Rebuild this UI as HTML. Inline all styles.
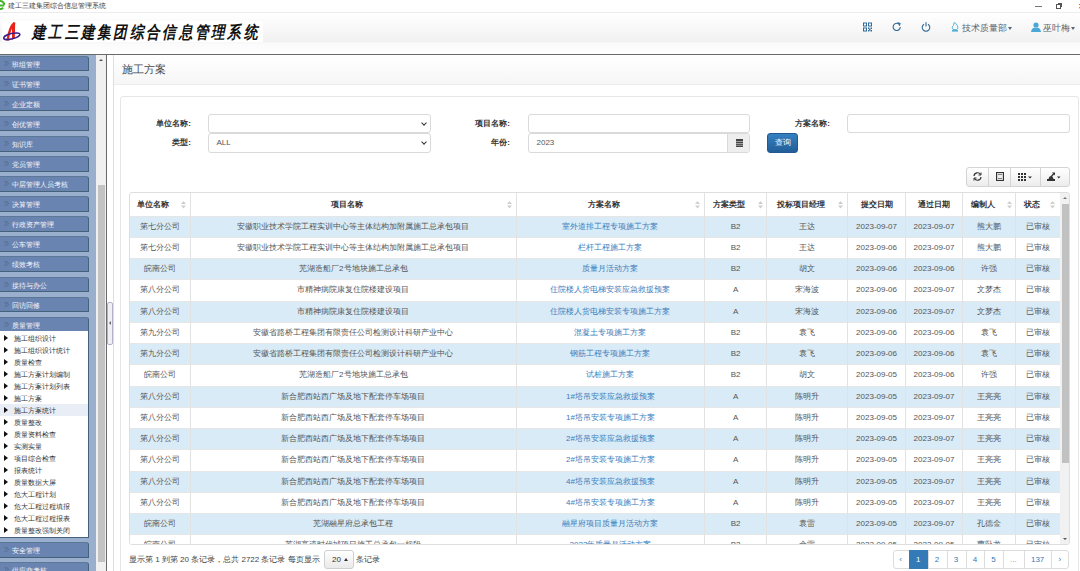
<!DOCTYPE html>
<html><head><meta charset="utf-8">
<style>
*{box-sizing:border-box;}
html,body{margin:0;padding:0;}
body{width:1080px;height:571px;overflow:hidden;position:relative;background:#fff;font-family:"Liberation Sans",sans-serif;color:#333;}
.abs{position:absolute;}
/* title bar */
#tb{left:0;top:0;width:1080px;height:13px;background:#fff;border-bottom:1px solid #ececec;}
#tb .t{left:8px;top:0.5px;font-size:7px;line-height:10px;color:#444;white-space:nowrap;}
/* header */
#hd{left:0;top:13px;width:1080px;height:41px;background:linear-gradient(#fff,#f1f1f1 29px,#f5f5f5 29px,#fafafa 30px,#fff 41px);}
#hdline{left:0;top:54px;width:1080px;height:1px;background:#6a6a6a;}
#logo{left:2px;top:21px;width:261px;height:21px;background:#fff;}
#logo .ttl{left:29.5px;top:2px;font-family:"Liberation Serif",serif;font-style:italic;font-weight:bold;font-size:17px;line-height:19px;letter-spacing:3.35px;color:#111;white-space:nowrap;transform:scaleX(0.8);transform-origin:0 0;}
.hic{top:21px;height:10px;}
.hnav{top:20.5px;font-size:9.3px;line-height:14px;color:#5a6673;white-space:nowrap;}
/* sidebar */
#sb{left:0;top:55px;width:96px;height:516px;background:#9aaecd;overflow:hidden;}
.mi{position:absolute;left:0;width:89px;height:15.5px;background:#6a84b1;border:1px solid #44637a;border-left:none;border-top-color:#5d7896;border-radius:0 3px 0 0;}
.mi span{position:absolute;left:12px;top:3px;font-size:7px;line-height:10px;color:#f6f8fc;white-space:nowrap;}
.mi i{position:absolute;left:4px;top:3px;width:6px;height:7px;}
.mi i svg{display:block;}
#sub{left:0;top:331px;width:89px;height:207px;background:#fff;border-right:1px solid #44637a;border-bottom:1px solid #44637a;}
.si{position:absolute;left:0;width:88px;height:12px;}
.si b{position:absolute;left:4px;top:3px;width:0;height:0;border-top:3px solid transparent;border-bottom:3px solid transparent;border-left:4px solid #111;}
.si span{position:absolute;left:13.5px;top:1.5px;font-size:7px;line-height:9px;color:#333;white-space:nowrap;}
#sbs{left:96px;top:55px;width:10px;height:516px;background:#f0f0f0;}
#sbthumb{left:98px;top:185px;width:7px;height:377px;background:#c3c3c3;}
#vline{left:106px;top:55px;width:1px;height:516px;background:#6a6a6a;}
#pline{left:113px;top:55px;width:1px;height:516px;background:#dcdcee;}
#handle{left:107px;top:302px;width:6px;height:43px;background:#f0f0f4;border:1px solid #b4b0cc;border-radius:2px;}
/* content */
#ch{left:114px;top:55px;width:966px;height:30px;background:linear-gradient(#fff,#f6f6f6);border-bottom:1px solid #ececec;}
#ch span{position:absolute;left:8px;top:7px;font-size:10.5px;line-height:14px;color:#4a4a4a;}
#panel{left:120px;top:96px;width:959px;height:490px;border:1px solid #e6e6e6;border-radius:3px;background:#fff;}
.lbl{font-size:8px;line-height:10px;color:#333;font-weight:bold;text-align:right;white-space:nowrap;}
.inp{height:19px;border:1px solid #dadada;border-radius:3px;background:#fff;}
.inp span{position:absolute;left:7.5px;top:4px;font-size:8px;line-height:10px;color:#555;}
.chev{position:absolute;right:4px;top:6px;width:4px;height:4px;border-right:1px solid #333;border-bottom:1px solid #333;transform:rotate(45deg);}
.cell{font-size:8px;line-height:21px;text-align:center;white-space:nowrap;overflow:hidden;}
.th{font-size:8px;line-height:10px;font-weight:bold;color:#333;white-space:nowrap;}
.foot{font-size:8px;line-height:10px;color:#444;white-space:nowrap;}
</style></head><body>

<!-- title bar -->
<div id="tb" class="abs">
  <svg class="abs" style="left:-4px;top:0px" width="9" height="10" viewBox="0 0 9 10"><path d="M8.3 5.6 H2 M8.3 5 A4 4 0 1 0 7.2 7.8" fill="none" stroke="#45b52c" stroke-width="2"/></svg>
  <div class="abs t">建工三建集团综合信息管理系统</div>
  <div class="abs" style="left:1035px;top:5.5px;width:7px;height:1px;background:#777;"></div>
  <div class="abs" style="left:1056px;top:4px;width:5px;height:5px;border:1px solid #555;"></div>
  <div class="abs" style="left:1058px;top:3px;width:4px;height:4px;border-top:1px solid #555;border-right:1px solid #555;"></div>
  <div class="abs" style="left:1078px;top:2px;font-size:8px;line-height:9px;color:#333;">✕</div>
</div>

<!-- header -->
<div id="hd" class="abs"></div>
<div id="logo" class="abs">
  <svg class="abs" style="left:0;top:0" width="22" height="21" viewBox="0 0 22 21">
    <path d="M10 4 L13.2 1 L12.8 17.5 L10 18.5 Z" fill="#e8221c"/>
    <path d="M12.6 1.8 Q7.5 6 5.6 19.5" fill="none" stroke="#e8221c" stroke-width="2.4"/>
    <ellipse cx="9.8" cy="15.2" rx="8.3" ry="2.7" fill="none" stroke="#3b1d86" stroke-width="1.5" transform="rotate(-14 9.8 15.2)"/>
  </svg>
  <div class="abs ttl">建工三建集团综合信息管理系统</div>
</div>
<div id="hdline" class="abs"></div>

<!-- header icons -->
<svg class="abs hic" style="left:863px;top:22px" width="9" height="9" viewBox="0 0 9 9" fill="#2f6a98">
  <path d="M0 0h4v4h-4zM1 1v2h2v-2zM5 0h4v4h-4zM6 1v2h2v-2zM0 5h4v4h-4zM1 6v2h2v-2z" fill-rule="evenodd"/>
  <rect x="5" y="5" width="1.5" height="1.5"/><rect x="7.5" y="5" width="1.5" height="1.5"/><rect x="6" y="6.5" width="1.5" height="1.5"/><rect x="5" y="7.5" width="1.2" height="1.5"/><rect x="7.5" y="7.5" width="1.5" height="1.5"/>
</svg>
<svg class="abs hic" style="left:892px;top:22px" width="10" height="10" viewBox="0 0 10 10" fill="none" stroke="#2f6a98" stroke-width="1.1">
  <path d="M8.3 5 A3.6 3.6 0 1 1 6.8 2"/><path d="M5.6 0.6 L8.3 1.4 L7.3 4" fill="#2f6a98" stroke-width="0.8"/>
</svg>
<svg class="abs hic" style="left:921px;top:22px" width="10" height="10" viewBox="0 0 10 10" fill="none" stroke="#2f6a98" stroke-width="1.1">
  <path d="M3 2.2 A3.8 3.8 0 1 0 7 2.2"/><path d="M5 0.3 V4.5"/>
</svg>
<svg class="abs hic" style="left:951px;top:22px" width="8" height="10" viewBox="0 0 8 10">
  <path d="M3 0.5 L5 1.5 L6.5 4 L7 6.5 L5.5 7.5 L2 7.5 L1 5 L2.5 3.5 Z" fill="none" stroke="#4fb0d8" stroke-width="0.9"/>
  <rect x="1" y="8" width="6" height="1.6" fill="#4fb0d8"/>
</svg>
<div class="abs hnav" style="left:962px;">技术质量部<span style="display:inline-block;width:0;height:0;border-left:2.5px solid transparent;border-right:2.5px solid transparent;border-top:3px solid #5a6673;vertical-align:middle;margin-left:1px"></span></div>
<svg class="abs hic" style="left:1031px;top:22px" width="10" height="10" viewBox="0 0 10 10">
  <circle cx="5" cy="3" r="2.6" fill="#4aa8d6"/><path d="M0 10 Q0.5 6 3.5 5.8 L6.5 5.8 Q9.5 6 10 10 Z" fill="#4aa8d6"/>
</svg>
<div class="abs hnav" style="left:1043px;">巫叶梅<span style="display:inline-block;width:0;height:0;border-left:2.5px solid transparent;border-right:2.5px solid transparent;border-top:3px solid #5a6673;vertical-align:middle;margin-left:1px"></span></div>

<!-- SIDEBAR -->
<div id="sb" class="abs">
<div class="mi" style="top:0.7px"><i><svg width="6" height="7" viewBox="0 0 6 7"><path d="M0.5 1 L2.5 3.5 L0.5 6 M2.5 1 L4.5 3.5 L2.5 6" fill="none" stroke="#44546c" stroke-width="0.7" stroke-dasharray="1 0.6"/></svg></i><span>班组管理</span></div>
<div class="mi" style="top:20.8px"><i><svg width="6" height="7" viewBox="0 0 6 7"><path d="M0.5 1 L2.5 3.5 L0.5 6 M2.5 1 L4.5 3.5 L2.5 6" fill="none" stroke="#44546c" stroke-width="0.7" stroke-dasharray="1 0.6"/></svg></i><span>证书管理</span></div>
<div class="mi" style="top:40.8px"><i><svg width="6" height="7" viewBox="0 0 6 7"><path d="M0.5 1 L2.5 3.5 L0.5 6 M2.5 1 L4.5 3.5 L2.5 6" fill="none" stroke="#44546c" stroke-width="0.7" stroke-dasharray="1 0.6"/></svg></i><span>企业定额</span></div>
<div class="mi" style="top:60.9px"><i><svg width="6" height="7" viewBox="0 0 6 7"><path d="M0.5 1 L2.5 3.5 L0.5 6 M2.5 1 L4.5 3.5 L2.5 6" fill="none" stroke="#44546c" stroke-width="0.7" stroke-dasharray="1 0.6"/></svg></i><span>创优管理</span></div>
<div class="mi" style="top:81.0px"><i><svg width="6" height="7" viewBox="0 0 6 7"><path d="M0.5 1 L2.5 3.5 L0.5 6 M2.5 1 L4.5 3.5 L2.5 6" fill="none" stroke="#44546c" stroke-width="0.7" stroke-dasharray="1 0.6"/></svg></i><span>知识库</span></div>
<div class="mi" style="top:101.1px"><i><svg width="6" height="7" viewBox="0 0 6 7"><path d="M0.5 1 L2.5 3.5 L0.5 6 M2.5 1 L4.5 3.5 L2.5 6" fill="none" stroke="#44546c" stroke-width="0.7" stroke-dasharray="1 0.6"/></svg></i><span>党员管理</span></div>
<div class="mi" style="top:121.1px"><i><svg width="6" height="7" viewBox="0 0 6 7"><path d="M0.5 1 L2.5 3.5 L0.5 6 M2.5 1 L4.5 3.5 L2.5 6" fill="none" stroke="#44546c" stroke-width="0.7" stroke-dasharray="1 0.6"/></svg></i><span>中层管理人员考核</span></div>
<div class="mi" style="top:141.2px"><i><svg width="6" height="7" viewBox="0 0 6 7"><path d="M0.5 1 L2.5 3.5 L0.5 6 M2.5 1 L4.5 3.5 L2.5 6" fill="none" stroke="#44546c" stroke-width="0.7" stroke-dasharray="1 0.6"/></svg></i><span>决算管理</span></div>
<div class="mi" style="top:161.3px"><i><svg width="6" height="7" viewBox="0 0 6 7"><path d="M0.5 1 L2.5 3.5 L0.5 6 M2.5 1 L4.5 3.5 L2.5 6" fill="none" stroke="#44546c" stroke-width="0.7" stroke-dasharray="1 0.6"/></svg></i><span>行政资产管理</span></div>
<div class="mi" style="top:181.3px"><i><svg width="6" height="7" viewBox="0 0 6 7"><path d="M0.5 1 L2.5 3.5 L0.5 6 M2.5 1 L4.5 3.5 L2.5 6" fill="none" stroke="#44546c" stroke-width="0.7" stroke-dasharray="1 0.6"/></svg></i><span>公车管理</span></div>
<div class="mi" style="top:201.4px"><i><svg width="6" height="7" viewBox="0 0 6 7"><path d="M0.5 1 L2.5 3.5 L0.5 6 M2.5 1 L4.5 3.5 L2.5 6" fill="none" stroke="#44546c" stroke-width="0.7" stroke-dasharray="1 0.6"/></svg></i><span>绩效考核</span></div>
<div class="mi" style="top:221.5px"><i><svg width="6" height="7" viewBox="0 0 6 7"><path d="M0.5 1 L2.5 3.5 L0.5 6 M2.5 1 L4.5 3.5 L2.5 6" fill="none" stroke="#44546c" stroke-width="0.7" stroke-dasharray="1 0.6"/></svg></i><span>接待与办公</span></div>
<div class="mi" style="top:241.5px"><i><svg width="6" height="7" viewBox="0 0 6 7"><path d="M0.5 1 L2.5 3.5 L0.5 6 M2.5 1 L4.5 3.5 L2.5 6" fill="none" stroke="#44546c" stroke-width="0.7" stroke-dasharray="1 0.6"/></svg></i><span>回访回修</span></div>
<div class="mi" style="top:261.6px"><i><svg width="6" height="7" viewBox="0 0 6 7"><path d="M0.5 1 L2.5 3.5 L0.5 6 M2.5 1 L4.5 3.5 L2.5 6" fill="none" stroke="#44546c" stroke-width="0.7" stroke-dasharray="1 0.6"/></svg></i><span>质量管理</span></div>
<div class="abs" id="sub" style="top:276px"><div class="si" style="top:1.0px;"><b></b><span>施工组织设计</span></div><div class="si" style="top:13.0px;"><b></b><span>施工组织设计统计</span></div><div class="si" style="top:25.0px;"><b></b><span>质量检查</span></div><div class="si" style="top:37.0px;"><b></b><span>施工方案计划编制</span></div><div class="si" style="top:49.0px;"><b></b><span>施工方案计划列表</span></div><div class="si" style="top:61.0px;"><b></b><span>施工方案</span></div><div class="si" style="top:73.0px;background:#e9eef6;"><b></b><span>施工方案统计</span></div><div class="si" style="top:85.0px;"><b></b><span>质量整改</span></div><div class="si" style="top:97.0px;"><b></b><span>质量资料检查</span></div><div class="si" style="top:109.0px;"><b></b><span>实测实量</span></div><div class="si" style="top:121.0px;"><b></b><span>项目综合检查</span></div><div class="si" style="top:133.0px;"><b></b><span>报表统计</span></div><div class="si" style="top:145.0px;"><b></b><span>质量数据大屏</span></div><div class="si" style="top:157.0px;"><b></b><span>危大工程计划</span></div><div class="si" style="top:169.0px;"><b></b><span>危大工程过程填报</span></div><div class="si" style="top:181.0px;"><b></b><span>危大工程过程报表</span></div><div class="si" style="top:193.0px;"><b></b><span>质量整改强制关闭</span></div></div>
<div class="mi" style="top:487.0px"><i><svg width="6" height="7" viewBox="0 0 6 7"><path d="M0.5 1 L2.5 3.5 L0.5 6 M2.5 1 L4.5 3.5 L2.5 6" fill="none" stroke="#44546c" stroke-width="0.7" stroke-dasharray="1 0.6"/></svg></i><span>安全管理</span></div>
<div class="mi" style="top:507.2px"><i><svg width="6" height="7" viewBox="0 0 6 7"><path d="M0.5 1 L2.5 3.5 L0.5 6 M2.5 1 L4.5 3.5 L2.5 6" fill="none" stroke="#44546c" stroke-width="0.7" stroke-dasharray="1 0.6"/></svg></i><span>供应商考核</span></div>
</div>
<div id="sbs" class="abs"></div>
<div id="sbthumb" class="abs"></div>
<div class="abs" style="left:99px;top:59px;width:0;height:0;border-left:2px solid transparent;border-right:2px solid transparent;border-bottom:2.5px solid #555;"></div>
<div id="vline" class="abs"></div>
<div id="pline" class="abs"></div>
<div id="handle" class="abs"><div class="abs" style="left:1px;top:18px;width:0;height:0;border-top:2px solid transparent;border-bottom:2px solid transparent;border-right:2px solid #666;"></div></div>

<!-- CONTENT -->
<div id="ch" class="abs"><span>施工方案</span></div>
<div id="panel" class="abs"></div>

<div class="abs lbl" style="left:111px;width:80px;top:118.5px">单位名称:</div>
<div class="abs inp" style="left:208px;top:114px;width:223px;height:19px"><div class="chev"></div></div>
<div class="abs lbl" style="left:111px;width:80px;top:138px">类型:</div>
<div class="abs inp" style="left:208px;top:133px;width:223px;height:20px"><span>ALL</span><div class="chev"></div></div>
<div class="abs lbl" style="left:430px;width:80px;top:118.5px">项目名称:</div>
<div class="abs inp" style="left:528px;top:114px;width:222px;height:19px"></div>
<div class="abs lbl" style="left:430px;width:80px;top:138px">年份:</div>
<div class="abs inp" style="left:528px;top:133px;width:222px;height:20px"><span>2023</span><div class="abs" style="right:0;top:0;width:22px;height:100%;background:#eee;border-left:1px solid #d9d9d9;border-radius:0 3px 3px 0"><svg class="abs" style="left:8px;top:5px" width="7" height="8" viewBox="0 0 7 8"><rect x="0" y="0" width="7" height="8" fill="#444"/><path d="M0 2.5H7M0 4.5H7M0 6.3H7" stroke="#ddd" stroke-width="0.6"/></svg></div></div>
<div class="abs lbl" style="left:750px;width:80px;top:118.5px">方案名称:</div>
<div class="abs inp" style="left:847px;top:114px;width:223px;height:19px"></div>
<div class="abs" style="left:767px;top:133px;width:31px;height:20px;border-radius:3px;background:linear-gradient(#3680c0,#225e98);border:1px solid #215a92;color:#fff;font-size:8px;line-height:18px;text-align:center">查询</div>

<div class="abs" id="tbl" style="left:129px;top:192px;width:941px;height:353px;border:1px solid #dedede;border-radius:3px;overflow:hidden;background:#fff">
<div class="abs" style="left:0;top:22.5px;width:930px;height:21.2px;background:#d9ebf6;border-top:1px solid #e6e6e6"></div>
<div class="abs cell" style="left:-1.0px;top:22.5px;width:61.3px;height:21.2px;color:#555">第七分公司</div>
<div class="abs cell" style="left:60.3px;top:22.5px;width:326.1px;height:21.2px;color:#555">安徽职业技术学院工程实训中心等主体结构加附属施工总承包项目</div>
<div class="abs cell" style="left:386.4px;top:22.5px;width:188.1px;height:21.2px;color:#3b7dbd">室外道排工程专项施工方案</div>
<div class="abs cell" style="left:574.5px;top:22.5px;width:62.2px;height:21.2px;color:#555">B2</div>
<div class="abs cell" style="left:636.7px;top:22.5px;width:80.8px;height:21.2px;color:#555">王达</div>
<div class="abs cell" style="left:717.5px;top:22.5px;width:58.1px;height:21.2px;color:#555">2023-09-07</div>
<div class="abs cell" style="left:775.6px;top:22.5px;width:56.9px;height:21.2px;color:#555">2023-09-07</div>
<div class="abs cell" style="left:832.5px;top:22.5px;width:53.1px;height:21.2px;color:#555">熊大鹏</div>
<div class="abs cell" style="left:885.6px;top:22.5px;width:43.9px;height:21.2px;color:#555">已审核</div>
<div class="abs" style="left:0;top:43.8px;width:930px;height:21.2px;background:#fff;border-top:1px solid #e6e6e6"></div>
<div class="abs cell" style="left:-1.0px;top:43.8px;width:61.3px;height:21.2px;color:#555">第七分公司</div>
<div class="abs cell" style="left:60.3px;top:43.8px;width:326.1px;height:21.2px;color:#555">安徽职业技术学院工程实训中心等主体结构加附属施工总承包项目</div>
<div class="abs cell" style="left:386.4px;top:43.8px;width:188.1px;height:21.2px;color:#3b7dbd">栏杆工程施工方案</div>
<div class="abs cell" style="left:574.5px;top:43.8px;width:62.2px;height:21.2px;color:#555">B2</div>
<div class="abs cell" style="left:636.7px;top:43.8px;width:80.8px;height:21.2px;color:#555">王达</div>
<div class="abs cell" style="left:717.5px;top:43.8px;width:58.1px;height:21.2px;color:#555">2023-09-06</div>
<div class="abs cell" style="left:775.6px;top:43.8px;width:56.9px;height:21.2px;color:#555">2023-09-07</div>
<div class="abs cell" style="left:832.5px;top:43.8px;width:53.1px;height:21.2px;color:#555">熊大鹏</div>
<div class="abs cell" style="left:885.6px;top:43.8px;width:43.9px;height:21.2px;color:#555">已审核</div>
<div class="abs" style="left:0;top:65.0px;width:930px;height:21.2px;background:#d9ebf6;border-top:1px solid #e6e6e6"></div>
<div class="abs cell" style="left:-1.0px;top:65.0px;width:61.3px;height:21.2px;color:#555">皖南公司</div>
<div class="abs cell" style="left:60.3px;top:65.0px;width:326.1px;height:21.2px;color:#555">芜湖造船厂2号地块施工总承包</div>
<div class="abs cell" style="left:386.4px;top:65.0px;width:188.1px;height:21.2px;color:#3b7dbd">质量月活动方案</div>
<div class="abs cell" style="left:574.5px;top:65.0px;width:62.2px;height:21.2px;color:#555">B2</div>
<div class="abs cell" style="left:636.7px;top:65.0px;width:80.8px;height:21.2px;color:#555">胡文</div>
<div class="abs cell" style="left:717.5px;top:65.0px;width:58.1px;height:21.2px;color:#555">2023-09-06</div>
<div class="abs cell" style="left:775.6px;top:65.0px;width:56.9px;height:21.2px;color:#555">2023-09-06</div>
<div class="abs cell" style="left:832.5px;top:65.0px;width:53.1px;height:21.2px;color:#555">许强</div>
<div class="abs cell" style="left:885.6px;top:65.0px;width:43.9px;height:21.2px;color:#555">已审核</div>
<div class="abs" style="left:0;top:86.2px;width:930px;height:21.2px;background:#fff;border-top:1px solid #e6e6e6"></div>
<div class="abs cell" style="left:-1.0px;top:86.2px;width:61.3px;height:21.2px;color:#555">第八分公司</div>
<div class="abs cell" style="left:60.3px;top:86.2px;width:326.1px;height:21.2px;color:#555">市精神病院康复住院楼建设项目</div>
<div class="abs cell" style="left:386.4px;top:86.2px;width:188.1px;height:21.2px;color:#3b7dbd">住院楼人货电梯安装应急救援预案</div>
<div class="abs cell" style="left:574.5px;top:86.2px;width:62.2px;height:21.2px;color:#555">A</div>
<div class="abs cell" style="left:636.7px;top:86.2px;width:80.8px;height:21.2px;color:#555">宋海波</div>
<div class="abs cell" style="left:717.5px;top:86.2px;width:58.1px;height:21.2px;color:#555">2023-09-06</div>
<div class="abs cell" style="left:775.6px;top:86.2px;width:56.9px;height:21.2px;color:#555">2023-09-07</div>
<div class="abs cell" style="left:832.5px;top:86.2px;width:53.1px;height:21.2px;color:#555">文梦杰</div>
<div class="abs cell" style="left:885.6px;top:86.2px;width:43.9px;height:21.2px;color:#555">已审核</div>
<div class="abs" style="left:0;top:107.5px;width:930px;height:21.2px;background:#d9ebf6;border-top:1px solid #e6e6e6"></div>
<div class="abs cell" style="left:-1.0px;top:107.5px;width:61.3px;height:21.2px;color:#555">第八分公司</div>
<div class="abs cell" style="left:60.3px;top:107.5px;width:326.1px;height:21.2px;color:#555">市精神病院康复住院楼建设项目</div>
<div class="abs cell" style="left:386.4px;top:107.5px;width:188.1px;height:21.2px;color:#3b7dbd">住院楼人货电梯安装专项施工方案</div>
<div class="abs cell" style="left:574.5px;top:107.5px;width:62.2px;height:21.2px;color:#555">A</div>
<div class="abs cell" style="left:636.7px;top:107.5px;width:80.8px;height:21.2px;color:#555">宋海波</div>
<div class="abs cell" style="left:717.5px;top:107.5px;width:58.1px;height:21.2px;color:#555">2023-09-06</div>
<div class="abs cell" style="left:775.6px;top:107.5px;width:56.9px;height:21.2px;color:#555">2023-09-07</div>
<div class="abs cell" style="left:832.5px;top:107.5px;width:53.1px;height:21.2px;color:#555">文梦杰</div>
<div class="abs cell" style="left:885.6px;top:107.5px;width:43.9px;height:21.2px;color:#555">已审核</div>
<div class="abs" style="left:0;top:128.8px;width:930px;height:21.2px;background:#fff;border-top:1px solid #e6e6e6"></div>
<div class="abs cell" style="left:-1.0px;top:128.8px;width:61.3px;height:21.2px;color:#555">第九分公司</div>
<div class="abs cell" style="left:60.3px;top:128.8px;width:326.1px;height:21.2px;color:#555">安徽省路桥工程集团有限责任公司检测设计科研产业中心</div>
<div class="abs cell" style="left:386.4px;top:128.8px;width:188.1px;height:21.2px;color:#3b7dbd">混凝土专项施工方案</div>
<div class="abs cell" style="left:574.5px;top:128.8px;width:62.2px;height:21.2px;color:#555">B2</div>
<div class="abs cell" style="left:636.7px;top:128.8px;width:80.8px;height:21.2px;color:#555">袁飞</div>
<div class="abs cell" style="left:717.5px;top:128.8px;width:58.1px;height:21.2px;color:#555">2023-09-06</div>
<div class="abs cell" style="left:775.6px;top:128.8px;width:56.9px;height:21.2px;color:#555">2023-09-06</div>
<div class="abs cell" style="left:832.5px;top:128.8px;width:53.1px;height:21.2px;color:#555">袁飞</div>
<div class="abs cell" style="left:885.6px;top:128.8px;width:43.9px;height:21.2px;color:#555">已审核</div>
<div class="abs" style="left:0;top:150.0px;width:930px;height:21.2px;background:#d9ebf6;border-top:1px solid #e6e6e6"></div>
<div class="abs cell" style="left:-1.0px;top:150.0px;width:61.3px;height:21.2px;color:#555">第九分公司</div>
<div class="abs cell" style="left:60.3px;top:150.0px;width:326.1px;height:21.2px;color:#555">安徽省路桥工程集团有限责任公司检测设计科研产业中心</div>
<div class="abs cell" style="left:386.4px;top:150.0px;width:188.1px;height:21.2px;color:#3b7dbd">钢筋工程专项施工方案</div>
<div class="abs cell" style="left:574.5px;top:150.0px;width:62.2px;height:21.2px;color:#555">B2</div>
<div class="abs cell" style="left:636.7px;top:150.0px;width:80.8px;height:21.2px;color:#555">袁飞</div>
<div class="abs cell" style="left:717.5px;top:150.0px;width:58.1px;height:21.2px;color:#555">2023-09-06</div>
<div class="abs cell" style="left:775.6px;top:150.0px;width:56.9px;height:21.2px;color:#555">2023-09-06</div>
<div class="abs cell" style="left:832.5px;top:150.0px;width:53.1px;height:21.2px;color:#555">袁飞</div>
<div class="abs cell" style="left:885.6px;top:150.0px;width:43.9px;height:21.2px;color:#555">已审核</div>
<div class="abs" style="left:0;top:171.2px;width:930px;height:21.2px;background:#fff;border-top:1px solid #e6e6e6"></div>
<div class="abs cell" style="left:-1.0px;top:171.2px;width:61.3px;height:21.2px;color:#555">皖南公司</div>
<div class="abs cell" style="left:60.3px;top:171.2px;width:326.1px;height:21.2px;color:#555">芜湖造船厂2号地块施工总承包</div>
<div class="abs cell" style="left:386.4px;top:171.2px;width:188.1px;height:21.2px;color:#3b7dbd">试桩施工方案</div>
<div class="abs cell" style="left:574.5px;top:171.2px;width:62.2px;height:21.2px;color:#555">B2</div>
<div class="abs cell" style="left:636.7px;top:171.2px;width:80.8px;height:21.2px;color:#555">胡文</div>
<div class="abs cell" style="left:717.5px;top:171.2px;width:58.1px;height:21.2px;color:#555">2023-09-05</div>
<div class="abs cell" style="left:775.6px;top:171.2px;width:56.9px;height:21.2px;color:#555">2023-09-06</div>
<div class="abs cell" style="left:832.5px;top:171.2px;width:53.1px;height:21.2px;color:#555">许强</div>
<div class="abs cell" style="left:885.6px;top:171.2px;width:43.9px;height:21.2px;color:#555">已审核</div>
<div class="abs" style="left:0;top:192.5px;width:930px;height:21.2px;background:#d9ebf6;border-top:1px solid #e6e6e6"></div>
<div class="abs cell" style="left:-1.0px;top:192.5px;width:61.3px;height:21.2px;color:#555">第八分公司</div>
<div class="abs cell" style="left:60.3px;top:192.5px;width:326.1px;height:21.2px;color:#555">新合肥西站西广场及地下配套停车场项目</div>
<div class="abs cell" style="left:386.4px;top:192.5px;width:188.1px;height:21.2px;color:#3b7dbd">1#塔吊安装应急救援预案</div>
<div class="abs cell" style="left:574.5px;top:192.5px;width:62.2px;height:21.2px;color:#555">A</div>
<div class="abs cell" style="left:636.7px;top:192.5px;width:80.8px;height:21.2px;color:#555">陈明升</div>
<div class="abs cell" style="left:717.5px;top:192.5px;width:58.1px;height:21.2px;color:#555">2023-09-05</div>
<div class="abs cell" style="left:775.6px;top:192.5px;width:56.9px;height:21.2px;color:#555">2023-09-07</div>
<div class="abs cell" style="left:832.5px;top:192.5px;width:53.1px;height:21.2px;color:#555">王亮亮</div>
<div class="abs cell" style="left:885.6px;top:192.5px;width:43.9px;height:21.2px;color:#555">已审核</div>
<div class="abs" style="left:0;top:213.8px;width:930px;height:21.2px;background:#fff;border-top:1px solid #e6e6e6"></div>
<div class="abs cell" style="left:-1.0px;top:213.8px;width:61.3px;height:21.2px;color:#555">第八分公司</div>
<div class="abs cell" style="left:60.3px;top:213.8px;width:326.1px;height:21.2px;color:#555">新合肥西站西广场及地下配套停车场项目</div>
<div class="abs cell" style="left:386.4px;top:213.8px;width:188.1px;height:21.2px;color:#3b7dbd">1#塔吊安装专项施工方案</div>
<div class="abs cell" style="left:574.5px;top:213.8px;width:62.2px;height:21.2px;color:#555">A</div>
<div class="abs cell" style="left:636.7px;top:213.8px;width:80.8px;height:21.2px;color:#555">陈明升</div>
<div class="abs cell" style="left:717.5px;top:213.8px;width:58.1px;height:21.2px;color:#555">2023-09-05</div>
<div class="abs cell" style="left:775.6px;top:213.8px;width:56.9px;height:21.2px;color:#555">2023-09-07</div>
<div class="abs cell" style="left:832.5px;top:213.8px;width:53.1px;height:21.2px;color:#555">王亮亮</div>
<div class="abs cell" style="left:885.6px;top:213.8px;width:43.9px;height:21.2px;color:#555">已审核</div>
<div class="abs" style="left:0;top:235.0px;width:930px;height:21.2px;background:#d9ebf6;border-top:1px solid #e6e6e6"></div>
<div class="abs cell" style="left:-1.0px;top:235.0px;width:61.3px;height:21.2px;color:#555">第八分公司</div>
<div class="abs cell" style="left:60.3px;top:235.0px;width:326.1px;height:21.2px;color:#555">新合肥西站西广场及地下配套停车场项目</div>
<div class="abs cell" style="left:386.4px;top:235.0px;width:188.1px;height:21.2px;color:#3b7dbd">2#塔吊安装应急救援预案</div>
<div class="abs cell" style="left:574.5px;top:235.0px;width:62.2px;height:21.2px;color:#555">A</div>
<div class="abs cell" style="left:636.7px;top:235.0px;width:80.8px;height:21.2px;color:#555">陈明升</div>
<div class="abs cell" style="left:717.5px;top:235.0px;width:58.1px;height:21.2px;color:#555">2023-09-05</div>
<div class="abs cell" style="left:775.6px;top:235.0px;width:56.9px;height:21.2px;color:#555">2023-09-07</div>
<div class="abs cell" style="left:832.5px;top:235.0px;width:53.1px;height:21.2px;color:#555">王亮亮</div>
<div class="abs cell" style="left:885.6px;top:235.0px;width:43.9px;height:21.2px;color:#555">已审核</div>
<div class="abs" style="left:0;top:256.2px;width:930px;height:21.2px;background:#fff;border-top:1px solid #e6e6e6"></div>
<div class="abs cell" style="left:-1.0px;top:256.2px;width:61.3px;height:21.2px;color:#555">第八分公司</div>
<div class="abs cell" style="left:60.3px;top:256.2px;width:326.1px;height:21.2px;color:#555">新合肥西站西广场及地下配套停车场项目</div>
<div class="abs cell" style="left:386.4px;top:256.2px;width:188.1px;height:21.2px;color:#3b7dbd">2#塔吊安装专项施工方案</div>
<div class="abs cell" style="left:574.5px;top:256.2px;width:62.2px;height:21.2px;color:#555">A</div>
<div class="abs cell" style="left:636.7px;top:256.2px;width:80.8px;height:21.2px;color:#555">陈明升</div>
<div class="abs cell" style="left:717.5px;top:256.2px;width:58.1px;height:21.2px;color:#555">2023-09-05</div>
<div class="abs cell" style="left:775.6px;top:256.2px;width:56.9px;height:21.2px;color:#555">2023-09-07</div>
<div class="abs cell" style="left:832.5px;top:256.2px;width:53.1px;height:21.2px;color:#555">王亮亮</div>
<div class="abs cell" style="left:885.6px;top:256.2px;width:43.9px;height:21.2px;color:#555">已审核</div>
<div class="abs" style="left:0;top:277.5px;width:930px;height:21.2px;background:#d9ebf6;border-top:1px solid #e6e6e6"></div>
<div class="abs cell" style="left:-1.0px;top:277.5px;width:61.3px;height:21.2px;color:#555">第八分公司</div>
<div class="abs cell" style="left:60.3px;top:277.5px;width:326.1px;height:21.2px;color:#555">新合肥西站西广场及地下配套停车场项目</div>
<div class="abs cell" style="left:386.4px;top:277.5px;width:188.1px;height:21.2px;color:#3b7dbd">4#塔吊安装应急救援预案</div>
<div class="abs cell" style="left:574.5px;top:277.5px;width:62.2px;height:21.2px;color:#555">A</div>
<div class="abs cell" style="left:636.7px;top:277.5px;width:80.8px;height:21.2px;color:#555">陈明升</div>
<div class="abs cell" style="left:717.5px;top:277.5px;width:58.1px;height:21.2px;color:#555">2023-09-05</div>
<div class="abs cell" style="left:775.6px;top:277.5px;width:56.9px;height:21.2px;color:#555">2023-09-07</div>
<div class="abs cell" style="left:832.5px;top:277.5px;width:53.1px;height:21.2px;color:#555">王亮亮</div>
<div class="abs cell" style="left:885.6px;top:277.5px;width:43.9px;height:21.2px;color:#555">已审核</div>
<div class="abs" style="left:0;top:298.8px;width:930px;height:21.2px;background:#fff;border-top:1px solid #e6e6e6"></div>
<div class="abs cell" style="left:-1.0px;top:298.8px;width:61.3px;height:21.2px;color:#555">第八分公司</div>
<div class="abs cell" style="left:60.3px;top:298.8px;width:326.1px;height:21.2px;color:#555">新合肥西站西广场及地下配套停车场项目</div>
<div class="abs cell" style="left:386.4px;top:298.8px;width:188.1px;height:21.2px;color:#3b7dbd">4#塔吊安装专项施工方案</div>
<div class="abs cell" style="left:574.5px;top:298.8px;width:62.2px;height:21.2px;color:#555">A</div>
<div class="abs cell" style="left:636.7px;top:298.8px;width:80.8px;height:21.2px;color:#555">陈明升</div>
<div class="abs cell" style="left:717.5px;top:298.8px;width:58.1px;height:21.2px;color:#555">2023-09-05</div>
<div class="abs cell" style="left:775.6px;top:298.8px;width:56.9px;height:21.2px;color:#555">2023-09-07</div>
<div class="abs cell" style="left:832.5px;top:298.8px;width:53.1px;height:21.2px;color:#555">王亮亮</div>
<div class="abs cell" style="left:885.6px;top:298.8px;width:43.9px;height:21.2px;color:#555">已审核</div>
<div class="abs" style="left:0;top:320.0px;width:930px;height:21.2px;background:#d9ebf6;border-top:1px solid #e6e6e6"></div>
<div class="abs cell" style="left:-1.0px;top:320.0px;width:61.3px;height:21.2px;color:#555">皖南公司</div>
<div class="abs cell" style="left:60.3px;top:320.0px;width:326.1px;height:21.2px;color:#555">芜湖融星府总承包工程</div>
<div class="abs cell" style="left:386.4px;top:320.0px;width:188.1px;height:21.2px;color:#3b7dbd">融星府项目质量月活动方案</div>
<div class="abs cell" style="left:574.5px;top:320.0px;width:62.2px;height:21.2px;color:#555">B2</div>
<div class="abs cell" style="left:636.7px;top:320.0px;width:80.8px;height:21.2px;color:#555">袁雷</div>
<div class="abs cell" style="left:717.5px;top:320.0px;width:58.1px;height:21.2px;color:#555">2023-09-05</div>
<div class="abs cell" style="left:775.6px;top:320.0px;width:56.9px;height:21.2px;color:#555">2023-09-07</div>
<div class="abs cell" style="left:832.5px;top:320.0px;width:53.1px;height:21.2px;color:#555">孔德金</div>
<div class="abs cell" style="left:885.6px;top:320.0px;width:43.9px;height:21.2px;color:#555">已审核</div>
<div class="abs" style="left:0;top:341.2px;width:930px;height:21.2px;background:#fff;border-top:1px solid #e6e6e6"></div>
<div class="abs cell" style="left:-1.0px;top:341.2px;width:61.3px;height:21.2px;color:#555">皖南公司</div>
<div class="abs cell" style="left:60.3px;top:341.2px;width:326.1px;height:21.2px;color:#555">芜湖高速时代城项目施工总承包一标段</div>
<div class="abs cell" style="left:386.4px;top:341.2px;width:188.1px;height:21.2px;color:#3b7dbd">2023年质量月活动方案</div>
<div class="abs cell" style="left:574.5px;top:341.2px;width:62.2px;height:21.2px;color:#555">B2</div>
<div class="abs cell" style="left:636.7px;top:341.2px;width:80.8px;height:21.2px;color:#555">余雷</div>
<div class="abs cell" style="left:717.5px;top:341.2px;width:58.1px;height:21.2px;color:#555">2023-09-05</div>
<div class="abs cell" style="left:775.6px;top:341.2px;width:56.9px;height:21.2px;color:#555">2023-09-05</div>
<div class="abs cell" style="left:832.5px;top:341.2px;width:53.1px;height:21.2px;color:#555">曹卧龙</div>
<div class="abs cell" style="left:885.6px;top:341.2px;width:43.9px;height:21.2px;color:#555">已审核</div>
<div class="abs th" style="left:-1.0px;top:0;width:61.3px;height:22.5px"><span style="position:absolute;left:8px;top:7px">单位名称</span><svg class="abs" style="right:4px;top:8px" width="5" height="8" viewBox="0 0 5 8"><path d="M2.5 0 L5 3 L0 3 Z M0 4.5 L5 4.5 L2.5 7.5 Z" fill="#cfcfcf"/></svg></div>
<div class="abs th" style="left:60.3px;top:0;width:326.1px;height:22.5px"><span style="position:absolute;left:0;right:12px;top:7px;text-align:center">项目名称</span><svg class="abs" style="right:4px;top:8px" width="5" height="8" viewBox="0 0 5 8"><path d="M2.5 0 L5 3 L0 3 Z M0 4.5 L5 4.5 L2.5 7.5 Z" fill="#cfcfcf"/></svg></div>
<div class="abs th" style="left:386.4px;top:0;width:188.1px;height:22.5px"><span style="position:absolute;left:0;right:12px;top:7px;text-align:center">方案名称</span><svg class="abs" style="right:4px;top:8px" width="5" height="8" viewBox="0 0 5 8"><path d="M2.5 0 L5 3 L0 3 Z M0 4.5 L5 4.5 L2.5 7.5 Z" fill="#cfcfcf"/></svg></div>
<div class="abs th" style="left:574.5px;top:0;width:62.2px;height:22.5px"><span style="position:absolute;left:8px;top:7px">方案类型</span><svg class="abs" style="right:4px;top:8px" width="5" height="8" viewBox="0 0 5 8"><path d="M2.5 0 L5 3 L0 3 Z M0 4.5 L5 4.5 L2.5 7.5 Z" fill="#cfcfcf"/></svg></div>
<div class="abs th" style="left:636.7px;top:0;width:80.8px;height:22.5px"><span style="position:absolute;left:10px;top:7px">投标项目经理</span><svg class="abs" style="right:4px;top:8px" width="5" height="8" viewBox="0 0 5 8"><path d="M2.5 0 L5 3 L0 3 Z M0 4.5 L5 4.5 L2.5 7.5 Z" fill="#cfcfcf"/></svg></div>
<div class="abs th" style="left:717.5px;top:0;width:58.1px;height:22.5px"><span style="position:absolute;left:0;right:0px;top:7px;text-align:center">提交日期</span></div>
<div class="abs th" style="left:775.6px;top:0;width:56.9px;height:22.5px"><span style="position:absolute;left:0;right:0px;top:7px;text-align:center">通过日期</span></div>
<div class="abs th" style="left:832.5px;top:0;width:53.1px;height:22.5px"><span style="position:absolute;left:8px;top:7px">编制人</span><svg class="abs" style="right:4px;top:8px" width="5" height="8" viewBox="0 0 5 8"><path d="M2.5 0 L5 3 L0 3 Z M0 4.5 L5 4.5 L2.5 7.5 Z" fill="#cfcfcf"/></svg></div>
<div class="abs th" style="left:885.6px;top:0;width:43.9px;height:22.5px"><span style="position:absolute;left:8px;top:7px">状态</span><svg class="abs" style="right:4px;top:8px" width="5" height="8" viewBox="0 0 5 8"><path d="M2.5 0 L5 3 L0 3 Z M0 4.5 L5 4.5 L2.5 7.5 Z" fill="#cfcfcf"/></svg></div>
<div class="abs" style="left:59.8px;top:0;width:1px;height:352px;background:#e2e2e2"></div>
<div class="abs" style="left:385.9px;top:0;width:1px;height:352px;background:#e2e2e2"></div>
<div class="abs" style="left:574.0px;top:0;width:1px;height:352px;background:#e2e2e2"></div>
<div class="abs" style="left:636.2px;top:0;width:1px;height:352px;background:#e2e2e2"></div>
<div class="abs" style="left:717.0px;top:0;width:1px;height:352px;background:#e2e2e2"></div>
<div class="abs" style="left:775.1px;top:0;width:1px;height:352px;background:#e2e2e2"></div>
<div class="abs" style="left:832.0px;top:0;width:1px;height:352px;background:#e2e2e2"></div>
<div class="abs" style="left:885.1px;top:0;width:1px;height:352px;background:#e2e2e2"></div>
<div class="abs" style="left:930px;top:0;width:11px;height:352px;background:#f1f1f1"></div>
<div class="abs" style="left:931.5px;top:10.5px;width:7.5px;height:259px;background:#c1c1c1"></div>
<div class="abs" style="left:932.5px;top:4px;width:0;height:0;border-left:2.5px solid transparent;border-right:2.5px solid transparent;border-bottom:2.5px solid #777"></div>
<div class="abs" style="left:932.5px;top:345px;width:0;height:0;border-left:2.5px solid transparent;border-right:2.5px solid transparent;border-top:2.5px solid #555"></div>
</div>
<div class="abs" style="left:966px;top:167px;width:104px;height:20px;border:1px solid #d4d4d4;border-radius:3px;background:linear-gradient(#fff,#ececec)"></div>
<div class="abs" style="left:987.5px;top:167px;width:1px;height:20px;background:#d4d4d4"></div>
<div class="abs" style="left:1009.5px;top:167px;width:1px;height:20px;background:#d4d4d4"></div>
<div class="abs" style="left:1039.5px;top:167px;width:1px;height:20px;background:#d4d4d4"></div>
<svg class="abs" style="left:973px;top:172px" width="9" height="9" viewBox="0 0 9 9" fill="none" stroke="#333" stroke-width="1.2"><path d="M1 4 A3.5 3.5 0 0 1 7.5 2.5"/><path d="M8 5 A3.5 3.5 0 0 1 1.5 6.5"/><path d="M8 0.5 V3 H5.5" stroke-width="1"/><path d="M1 8.5 V6 H3.5" stroke-width="1"/></svg>
<svg class="abs" style="left:995.5px;top:172px" width="8" height="9" viewBox="0 0 8 9"><rect x="0.5" y="0.5" width="7" height="8" fill="#ccc" stroke="#333" stroke-width="1"/><rect x="2" y="1.5" width="4" height="6" fill="#eee"/><path d="M2 2.5H6M2 6.5H6" stroke="#555" stroke-width="0.7"/></svg>
<svg class="abs" style="left:1018px;top:173px" width="14" height="8" viewBox="0 0 14 8"><g fill="#333"><rect x="0" y="0" width="2" height="2"/><rect x="3" y="0" width="2" height="2"/><rect x="6" y="0" width="2" height="2"/><rect x="0" y="3" width="2" height="2"/><rect x="3" y="3" width="2" height="2"/><rect x="6" y="3" width="2" height="2"/><rect x="0" y="6" width="2" height="2"/><rect x="3" y="6" width="2" height="2"/><rect x="6" y="6" width="2" height="2"/><path d="M10 3.5 L14 3.5 L12 5.5Z"/></g></svg>
<svg class="abs" style="left:1047px;top:172px" width="14" height="9" viewBox="0 0 14 9"><g fill="#333"><path d="M1.5 7 L2.5 4.5 L5.5 4.5 L6.5 7Z"/><path d="M3 5 L6 1.5 L5 0.5 L8 0.5 L8 3.5 L7 2.5 L4.2 5.5Z"/><rect x="0" y="7" width="8" height="2"/><path d="M10 4.5 L13.5 4.5 L11.75 6.5Z"/></g></svg>
<div class="abs foot" style="left:129px;top:555px">显示第 1 到第 20 条记录，总共 2722 条记录 每页显示</div>
<div class="abs" style="left:324px;top:550px;width:30px;height:19px;border:1px solid #d0d0d0;border-radius:3px;background:linear-gradient(#fff,#eaeaea);font-size:8px;line-height:17px;color:#333;padding-left:7px">20<span style="display:inline-block;width:0;height:0;border-left:2.5px solid transparent;border-right:2.5px solid transparent;border-bottom:3px solid #333;margin-left:3px;vertical-align:1px"></span></div>
<div class="abs foot" style="left:356px;top:555px">条记录</div>
<div class="abs" style="left:892.5px;top:550px;width:176px;height:19px;border:1px solid #dcdcdc;border-radius:3px;background:#fff"></div>
<div class="abs" style="left:892.6px;top:550px;width:16.1px;height:19px;color:#3a78b5;font-size:8px;line-height:19px;text-align:center">‹</div>
<div class="abs" style="left:908.7px;top:550px;width:19.0px;height:19px;background:#337ab7;color:#fff;font-size:8px;line-height:19px;text-align:center">1</div>
<div class="abs" style="left:927.7px;top:550px;width:18.8px;height:19px;color:#3a78b5;font-size:8px;line-height:19px;text-align:center">2</div>
<div class="abs" style="left:927.7px;top:550px;width:1px;height:19px;background:#dcdcdc"></div>
<div class="abs" style="left:946.5px;top:550px;width:19.0px;height:19px;color:#3a78b5;font-size:8px;line-height:19px;text-align:center">3</div>
<div class="abs" style="left:946.5px;top:550px;width:1px;height:19px;background:#dcdcdc"></div>
<div class="abs" style="left:965.5px;top:550px;width:18.9px;height:19px;color:#3a78b5;font-size:8px;line-height:19px;text-align:center">4</div>
<div class="abs" style="left:965.5px;top:550px;width:1px;height:19px;background:#dcdcdc"></div>
<div class="abs" style="left:984.4px;top:550px;width:18.2px;height:19px;color:#3a78b5;font-size:8px;line-height:19px;text-align:center">5</div>
<div class="abs" style="left:984.4px;top:550px;width:1px;height:19px;background:#dcdcdc"></div>
<div class="abs" style="left:1002.6px;top:550px;width:21.4px;height:19px;color:#999;font-size:8px;line-height:19px;text-align:center">...</div>
<div class="abs" style="left:1002.6px;top:550px;width:1px;height:19px;background:#dcdcdc"></div>
<div class="abs" style="left:1024px;top:550px;width:27.3px;height:19px;color:#3a78b5;font-size:8px;line-height:19px;text-align:center">137</div>
<div class="abs" style="left:1024px;top:550px;width:1px;height:19px;background:#dcdcdc"></div>
<div class="abs" style="left:1051.3px;top:550px;width:17.2px;height:19px;color:#3a78b5;font-size:8px;line-height:19px;text-align:center">›</div>
<div class="abs" style="left:1051.3px;top:550px;width:1px;height:19px;background:#dcdcdc"></div>

</body></html>
